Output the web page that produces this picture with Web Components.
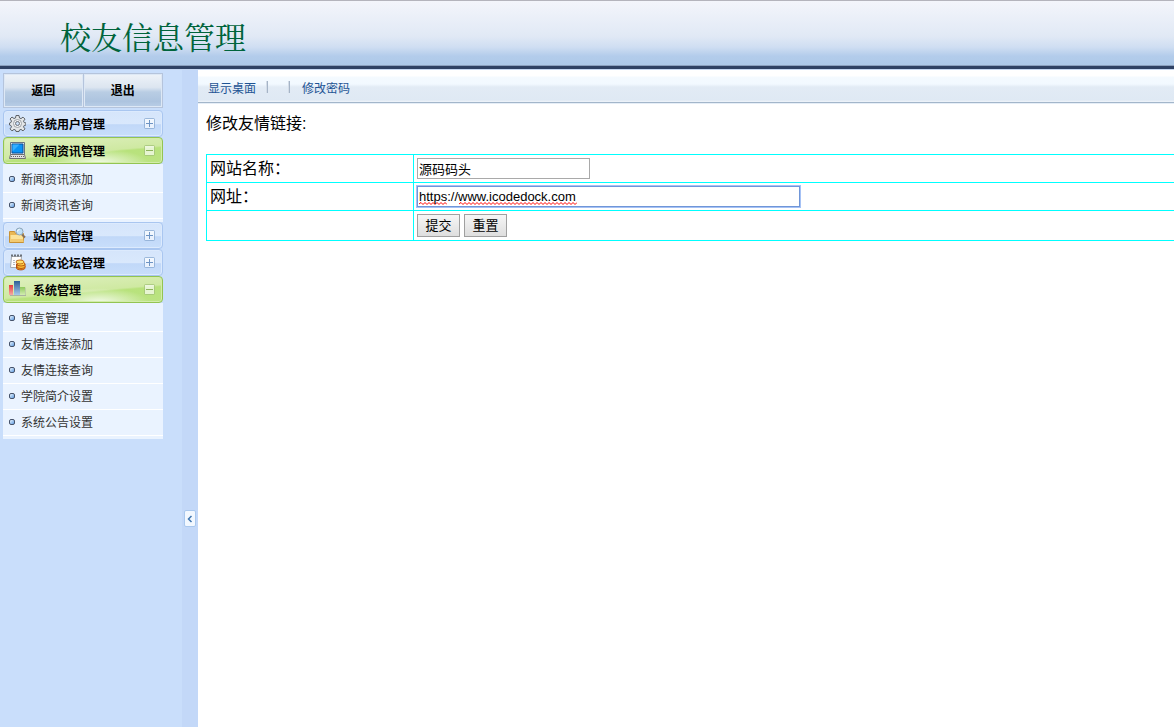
<!DOCTYPE html>
<html lang="zh-CN">
<head>
<meta charset="UTF-8">
<title>校友信息管理</title>
<style>
  body {
    margin: 0;
    min-height: 100vh;
    display: flex;
    flex-direction: column;
    background: #fff;
    color: #000;
    font-family: "Liberation Sans", "Noto Sans CJK SC", sans-serif;
    font-size: 12px;
  }
  .frame {
    flex: 1;
    display: flex;
  }
  .content {
    flex: 1;
    min-width: 0;
  }
</style>
</head>
<body>
  <page-header>校友信息管理</page-header>
  <div class="frame">
    <side-bar>
      <a slot="action" href="#back">返回</a>
      <a slot="action" href="#exit">退出</a>
      <menu-group label="系统用户管理" icon="gear"></menu-group>
      <menu-group label="新闻资讯管理" icon="computer" open>
        <menu-link href="#news-add">新闻资讯添加</menu-link>
        <menu-link href="#news-list">新闻资讯查询</menu-link>
      </menu-group>
      <menu-group label="站内信管理" icon="folder"></menu-group>
      <menu-group label="校友论坛管理" icon="notes"></menu-group>
      <menu-group label="系统管理" icon="chart" open>
        <menu-link href="#messages">留言管理</menu-link>
        <menu-link href="#link-add">友情连接添加</menu-link>
        <menu-link href="#link-list">友情连接查询</menu-link>
        <menu-link href="#college">学院简介设置</menu-link>
        <menu-link href="#notice">系统公告设置</menu-link>
      </menu-group>
    </side-bar>
    <frame-splitter></frame-splitter>
    <div class="content">
      <tool-bar></tool-bar>
      <link-form heading="修改友情链接:"></link-form>
    </div>
  </div>

<script>
const icons = {
  gear: `
    <path d="M7 .5h3l.5 2.500 1.500.6 2-1.500 2 2-1.500 2 .6 1.400 1.900.5v2l-1.900.5-.6 1.400 1.500 2-2 2-2-1.500-1.500.6-.5 1.500H7l-.5-1.500-1.500-.6-2 1.500-2-2 1.500-2-.6-1.400L.5 10V8l1.400-.5.6-1.500L1 4l2-2 2 1.500 1.500-.5z" fill="#e3e6e8" stroke="#5d6268"/>
    <circle cx="8.500" cy="8.500" r="4" fill="#f4f5f6" stroke="#9da2a7"/>
    <circle cx="8.500" cy="8.500" r="2" fill="#c8dcf4" stroke="#6c7177"/>`,
  computer: `
    <path d="M1.500.500h14v12h-14z" fill="#dfe5ea" stroke="#68747f"/>
    <path d="M3 2h11v9H3z" fill="#0a94f6" stroke="#064f9a"/>
    <path d="M3.500 2.500h7l-7 7z" fill="#35b0ff"/>
    <path d="M1.500 12.500h14l1 4H.5z" fill="#e2e2e2" stroke="#707070"/>
    <path d="M2 14.500h13" stroke="#666" stroke-dasharray="1 1"/>`,
  folder: `
    <path d="M.5 4.500h5l1 2h8v9H.5z" fill="#e9b855" stroke="#c89236"/>
    <path d="M1.500 8h12l1 7h-13z" fill="#fbe39a"/>
    <path d="M2 12h12v3H2z" fill="#f2ca72"/>
    <path d="M13 7.500l3 3" stroke="#86705a" stroke-width="2"/>
    <circle cx="10.500" cy="4.500" r="3.500" fill="#bfe0f7" stroke="#8fa5b8"/>
    <path d="M8.500 4.500q0-2 2-2" fill="none" stroke="#fff"/>`,
  notes: `
    <path d="M2.500 2.500h10l-1 11h-10z" fill="#fdfdfd" stroke="#a5aab0"/>
    <path d="M2 1.500h11" stroke="#6b7178" stroke-width="2" stroke-dasharray="2 1"/>
    <path d="M4 6.500h6M4 8.500h4M4 10.500h3" stroke="#b3b8bf" stroke-dasharray="2 1"/>
    <path d="M7.500 10v4c0 2.500 8.500 2.500 8.500 0v-4z" fill="#f2a11c" stroke="#b54c10"/>
    <ellipse cx="12" cy="12.500" rx="4" ry="2" fill="#f9bd32" stroke="#bd5a10"/>
    <ellipse cx="12" cy="10" rx="4" ry="2" fill="#ffd548" stroke="#bd5a10"/>
    <ellipse cx="11" cy="8" rx="4" ry="2" fill="#ffe16c" stroke="#c9701b"/>`,
  chart: `
    <path d="M0 4h4v10H0z" fill="url(#red)"/>
    <path d="M5 0h6v14H5z" fill="url(#blue)"/>
    <path d="M11 6h5v8h-5z" fill="url(#green)"/>
    <path d="M1 14.500h16v-8" fill="none" stroke="#a9b3a0"/>
    <defs>
      <linearGradient id="red" x2="0" y2="1"><stop stop-color="#e83a3a"/><stop offset="1" stop-color="#f3aaa6"/></linearGradient>
      <linearGradient id="blue" x2="0" y2="1"><stop stop-color="#2c5f96"/><stop offset="1" stop-color="#a6c9ea"/></linearGradient>
      <linearGradient id="green" x2="0" y2="1"><stop stop-color="#8fc95c"/><stop offset="1" stop-color="#d3edb1"/></linearGradient>
    </defs>`
};

class PageHeader extends HTMLElement {
  connectedCallback() {
    this.attachShadow({ mode: 'open' });
    this.shadowRoot.innerHTML = `
      <style>
        :host {
          display: block;
          border-top: 1px solid #b4b4bc;
          border-bottom: 1px solid #c6d8f2;
        }
        header {
          display: flex;
          align-items: center;
          height: 65px;
          padding: 5px 60px 0;
          box-sizing: border-box;
          border-bottom: 1px solid #8ba0bd;
          background: linear-gradient(#f3f5fb, #e1e9f5 55%, #cfdef2 72%, #b3cceb 86%, #adc9e8);
        }
        .rule {
          height: 3px;
          background: #2f4264;
        }
        h1 {
          margin: 0;
          color: #00643c;
          font: 400 31px/44px "Noto Serif CJK SC", "Noto Sans CJK SC", serif;
        }
      </style>
      <header><h1><slot></slot></h1></header>
      <div class="rule"></div>
    `;
  }
}
customElements.define('page-header', PageHeader);

class SideBar extends HTMLElement {
  connectedCallback() {
    this.attachShadow({ mode: 'open' });
    this.shadowRoot.innerHTML = `
      <style>
        :host {
          display: block;
          flex: none;
          box-sizing: border-box;
          width: 182px;
          padding: 3px 19px 0 3px;
          background: #c9defb;
        }
        .actions {
          display: flex;
          gap: 1px;
          margin-bottom: 2px;
          border: 1px solid #b5c4dc;
          background: #b5c4dc;
        }
        ::slotted([slot="action"]) {
          flex: 1;
          box-sizing: border-box;
          height: 33px;
          border: 1px solid #dde8f5;
          background: linear-gradient(#edf2f8, #dce5f0 40%, #b9cde4 55%, #adc4df 85%, #b7cce5);
          color: #000;
          font-weight: bold;
          line-height: 33px;
          text-align: center;
          text-decoration: none;
        }
      </style>
      <div class="actions"><slot name="action"></slot></div>
      <nav><slot></slot></nav>
    `;
  }
}
customElements.define('side-bar', SideBar);

class MenuGroup extends HTMLElement {
  connectedCallback() {
    this.attachShadow({ mode: 'open' });
    this.shadowRoot.innerHTML = `
      <style>
        :host {
          display: block;
        }
        button {
          display: flex;
          align-items: center;
          gap: 7px;
          width: 100%;
          height: 27px;
          padding: 0 7px 0 5px;
          border: 1px solid #a9c6f0;
          border-radius: 4px;
          background: linear-gradient(#d5e5fb, #d9e8fc 50%, #c1d8f8 55%, #c8defb);
          box-shadow: inset 0 0 0 1px #dceafd;
          color: #000;
          font: bold 12px/20px "Liberation Sans", "Noto Sans CJK SC", sans-serif;
          text-align: left;
          cursor: pointer;
        }
        :host([open]) button {
          border-color: #93c452;
          background:
            radial-gradient(ellipse 50px 14px at 60% 100%, rgba(255, 255, 255, .8), transparent),
            linear-gradient(175deg, #bbe382, #b8e27c 40%, #cfe9a2 45%, #dff0c0);
          box-shadow: inset 0 0 0 1px #d3ecaa;
        }
        .label {
          flex: 1;
          padding-top: 2px;
        }
        .icon {
          flex: none;
        }
        .items {
          display: none;
          padding: 3px 0;
          background: #eaf3ff;
        }
        :host([open]) .items {
          display: block;
        }
        .plus {
          stroke: #6d94c4;
        }
        :host([open]) .plus {
          stroke: #8eb45c;
        }
        :host([open]) .upright {
          display: none;
        }
        :host([open]) button {
          background:
            radial-gradient(ellipse 50px 14px at 60% 100%, rgba(255, 255, 255, .8), transparent),
            linear-gradient(175deg, #dff0c0, #cfe9a2 55%, #b8e27c 60%, #bbe382);
        }
      </style>
      <button type="button">
        <svg class="icon" width="17" height="17" viewBox="0 0 17 17">${icons[this.getAttribute('icon')]}</svg>
        <span class="label">${this.getAttribute('label')}</span>
        <svg class="plus" width="11" height="11" viewBox="0 0 11 11" fill="none">
          <rect x=".5" y=".5" width="10" height="10" rx="1" fill="#fff" fill-opacity=".65" stroke-opacity=".6"/>
          <path d="M2 5.500h7"/>
          <path class="upright" d="M5.500 2v7"/>
        </svg>
      </button>
      <div class="items"><slot></slot></div>
    `;
    this.shadowRoot.querySelector('button').addEventListener('click', () => {
      this.toggleAttribute('open');
    });
  }
}
customElements.define('menu-group', MenuGroup);

class MenuLink extends HTMLElement {
  connectedCallback() {
    this.attachShadow({ mode: 'open' });
    this.shadowRoot.innerHTML = `
      <style>
        :host {
          display: block;
          border-bottom: 1px solid #fff;
        }
        a {
          display: flex;
          align-items: center;
          gap: 6px;
          box-sizing: border-box;
          height: 25px;
          padding: 0 0 2px 6px;
          color: #333;
          text-decoration: none;
        }
        a::before {
          content: '';
          box-sizing: border-box;
          width: 6px;
          height: 6px;
          border: 1px solid #46536b;
          border-radius: 2px;
          background: linear-gradient(135deg, #e7f4ff, #5f9be0);
        }
      </style>
      <a href="${this.getAttribute('href')}"><slot></slot></a>
    `;
  }
}
customElements.define('menu-link', MenuLink);

class FrameSplitter extends HTMLElement {
  connectedCallback() {
    this.attachShadow({ mode: 'open' });
    this.shadowRoot.innerHTML = `
      <style>
        :host {
          display: grid;
          flex: none;
          grid-template-rows: 11fr auto 5fr;
          justify-items: center;
          width: 16px;
          background: #c3d8f8;
        }
        button {
          grid-row: 2;
          display: grid;
          place-items: center;
          width: 12px;
          height: 17px;
          padding: 0;
          border: 1px solid #a9c8ee;
          border-radius: 2px;
          background: #f2f8ff;
        }
      </style>
      <button type="button" aria-label="收起">
        <svg width="6" height="8" viewBox="0 0 6 8"><path d="M4.500 1l-3 3 3 3" fill="none" stroke="#3f76b0" stroke-width="1.500"/></svg>
      </button>
    `;
  }
}
customElements.define('frame-splitter', FrameSplitter);

class ToolBar extends HTMLElement {
  connectedCallback() {
    this.attachShadow({ mode: 'open' });
    this.shadowRoot.innerHTML = `
      <style>
        :host {
          display: flex;
          align-items: center;
          height: 32px;
          padding: 0 10px;
          border-bottom: 1px solid #a3b6ca;
          box-shadow: 0 1px #e6eef7;
          background: linear-gradient(#fff 6px, #f4faff 7px, #f2f9ff 14px, #e2ebf5 17px, #dfe9f4 30px, #f0f5fb);
        }
        a {
          padding-top: 2px;
          color: #1e5494;
          text-decoration: none;
        }
        i {
          width: 2px;
          height: 12px;
          margin: 2px 10px 0;
          background: linear-gradient(90deg, #d3dce7 50%, #a5b4c7 50%);
        }
        i + i {
          margin-right: 12px;
        }
      </style>
      <a href="#desktop">显示桌面</a><i></i><i></i><a href="#password">修改密码</a>
    `;
  }
}
customElements.define('tool-bar', ToolBar);

class LinkForm extends HTMLElement {
  connectedCallback() {
    this.attachShadow({ mode: 'open' });
    this.shadowRoot.innerHTML = `
      <style>
        :host {
          display: block;
          padding: 8px 0 8px 8px;
          font-size: 16px;
          line-height: 20px;
        }
        h2 {
          margin: 0 0 20px;
          padding-top: 3px;
          font-size: 16px;
          font-weight: normal;
          line-height: 20px;
        }
        table {
          width: 100%;
          table-layout: fixed;
          border-collapse: collapse;
        }
        td, th {
          padding: 3px;
          border: 1px solid #00ffff;
          font-weight: normal;
          text-align: left;
          vertical-align: middle;
        }
        th {
          width: 200px;
        }
        td {
          border-right: 0;
        }
        label {
          display: block;
          padding-top: 1px;
        }
        .buttons {
          display: flex;
          gap: 4px;
        }
        input, button {
          box-sizing: border-box;
          font: 13px/17px "Liberation Sans", "Noto Sans CJK SC", sans-serif;
          color: #000;
        }
        input {
          display: block;
          width: 173px;
          height: 21px;
          padding: 1px;
          border: 1px solid #a9a9a9;
          outline: none;
          background: #fff;
        }
        .wide {
          width: 383px;
          border-color: #7096d8;
          box-shadow: 0 0 0 1px #a6c2f5;
          background-repeat: no-repeat;
        }
        button {
          width: 43px;
          height: 23px;
          padding: 0;
          border: 1px solid #a0a0a0;
          background: linear-gradient(#f6f6f6, #dedede);
        }
      </style>
      <h2>${this.getAttribute('heading')}</h2>
      <form>
        <table>
          <tr>
            <th><label for="name">网站名称：</label></th>
            <td><input id="name" type="text" value="源码码头"></td>
          </tr>
          <tr>
            <th><label for="url">网址：</label></th>
            <td><input id="url" class="wide" type="text" value="https://www.icodedock.com"></td>
          </tr>
          <tr>
            <th></th>
            <td><div class="buttons"><button type="submit">提交</button><button type="reset">重置</button></div></td>
          </tr>
        </table>
      </form>
    `;
    this.markSpelling([[1, 28], [41, 118]]);
  }

  // red squiggles under the unknown words, as [start, width] pairs
  markSpelling(words) {
    const input = this.shadowRoot.querySelector('#url');
    input.style.backgroundImage = words.map(([, width]) => {
      let d = 'M0 2';
      for (let x = 2; x <= width; x += 2) d += `L${x} ${x % 4 ? 0.5 : 2.5}`;
      const svg = `<svg xmlns="http://www.w3.org/2000/svg" width="${width}" height="3"><path d="${d}" fill="none" stroke="red"/></svg>`;
      return `url("data:image/svg+xml,${encodeURIComponent(svg)}")`;
    }).join();
    input.style.backgroundPosition = words.map(([start]) => `${start}px 15px`).join();
  }
}
customElements.define('link-form', LinkForm);
</script>
</body>
</html>
